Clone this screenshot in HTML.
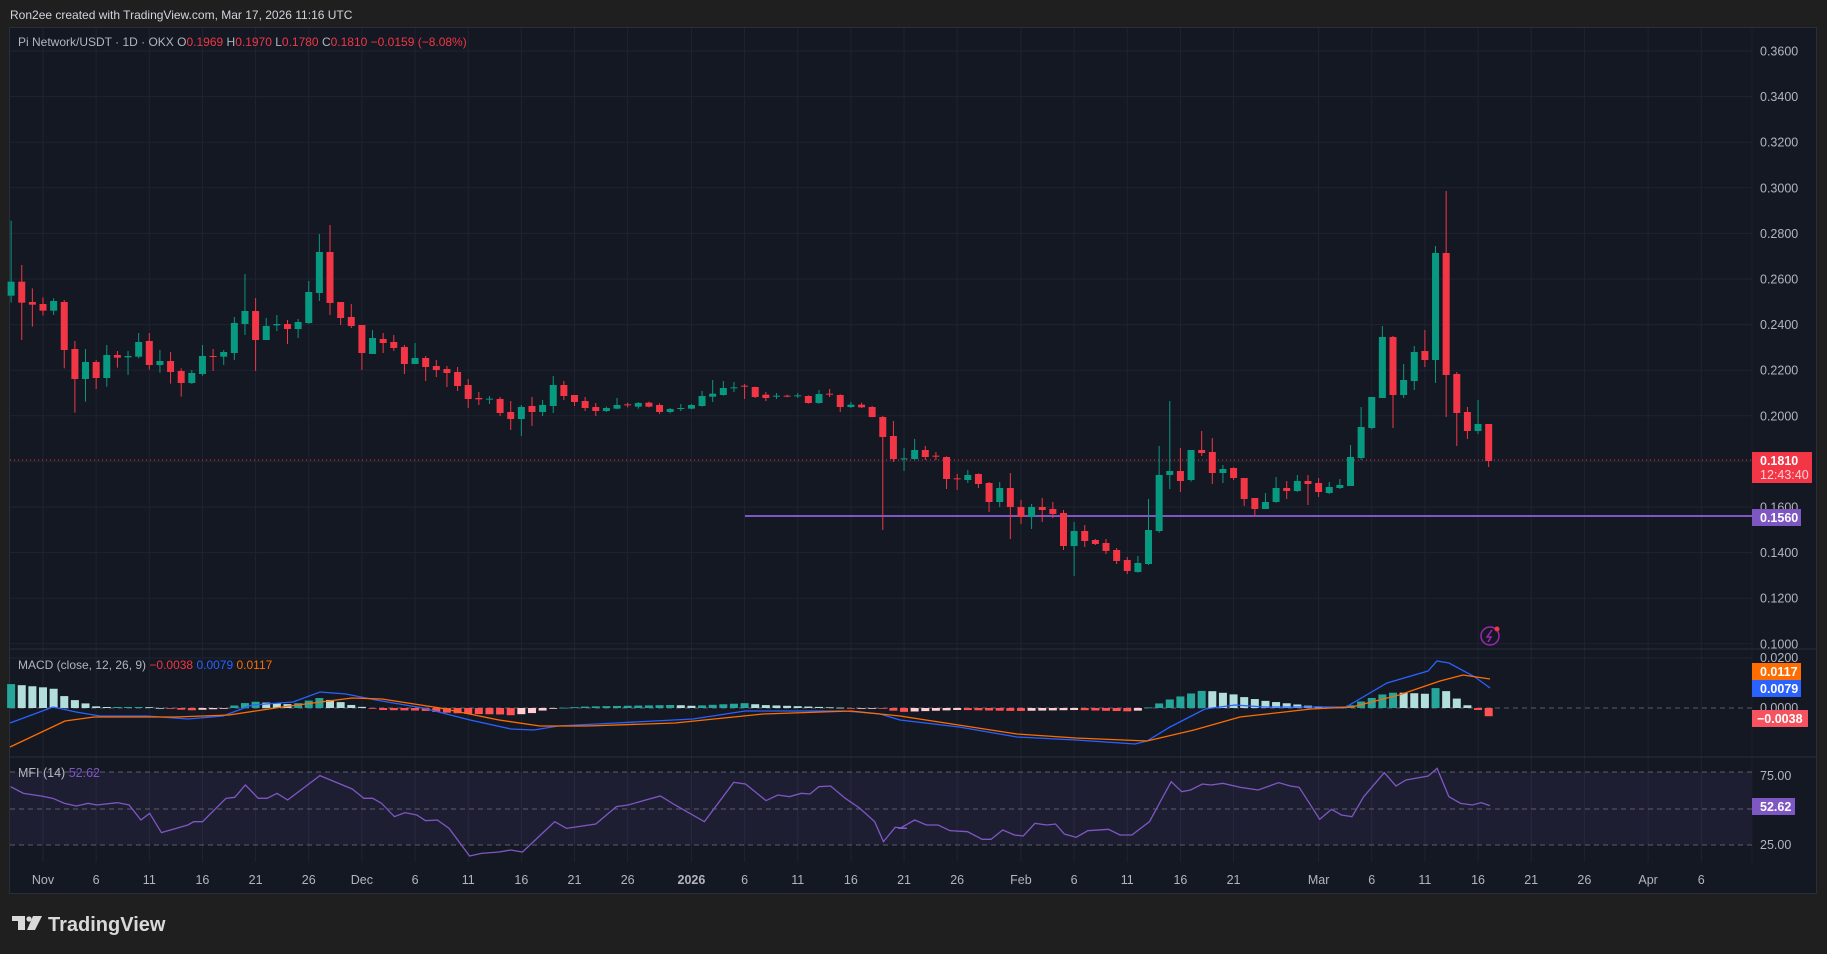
<!DOCTYPE html>
<html><head><meta charset="utf-8"><style>
html,body{margin:0;padding:0;background:#1f1f1f;width:1827px;height:954px;overflow:hidden}
svg{position:absolute;left:0;top:0;font-family:"Liberation Sans",sans-serif}
</style></head><body>
<svg id="s" width="1827" height="954" viewBox="0 0 1827 954" xmlns="http://www.w3.org/2000/svg">
<rect x="0" y="0" width="1827" height="954" fill="#1f1f1f"/>
<rect x="9.5" y="27.5" width="1807" height="866" fill="#141823" stroke="#2a2e39"/>
<g id="grid"></g>
<rect x="10" y="772" width="1742" height="73" fill="#7e57c2" fill-opacity="0.1"/>
<line x1="10" y1="649" x2="1816" y2="649" stroke="#2a2e39"/>
<line x1="10" y1="757" x2="1816" y2="757" stroke="#2a2e39"/>
<line x1="1752" y1="28" x2="1752" y2="862" stroke="#1c202b"/>
<g stroke="#787b86" stroke-opacity="0.7" stroke-dasharray="5,4">
<line x1="10" y1="708" x2="1752" y2="708"/>
<line x1="10" y1="772" x2="1752" y2="772"/>
<line x1="10" y1="809" x2="1752" y2="809"/>
<line x1="10" y1="845" x2="1752" y2="845"/>
</g>
<line x1="10" y1="460" x2="1752" y2="460" stroke="#f23645" stroke-dasharray="1,3"/>
<line x1="745" y1="516" x2="1752" y2="516" stroke="#7e57c2" stroke-width="2"/>
<g id="candles"></g>
<g id="hist"></g>
<g id="lines"></g>
<text x="10" y="19" font-size="12" fill="#d1d4dc">Ron2ee created with TradingView.com, Mar 17, 2026 11:16 UTC</text>
<text x="18" y="46" font-size="12" fill="#b2b5be">Pi Network/USDT · 1D · OKX  O<tspan fill="#f23645">0.1969</tspan>  H<tspan fill="#f23645">0.1970</tspan>  L<tspan fill="#f23645">0.1780</tspan>  C<tspan fill="#f23645">0.1810</tspan>  <tspan fill="#f23645">−0.0159 (−8.08%)</tspan></text>
<text x="18" y="669" font-size="12" fill="#b2b5be">MACD (close, 12, 26, 9)  <tspan fill="#f23645">−0.0038</tspan>  <tspan fill="#2962ff">0.0079</tspan>  <tspan fill="#ff6d00">0.0117</tspan></text>
<text x="18" y="777" font-size="12.5" fill="#b2b5be">MFI (14)  <tspan fill="#7e57c2">52.62</tspan></text>
<g id="axis" font-size="12.5" fill="#b2b5be"></g>
<g font-size="12.5" font-weight="bold" fill="#fff">
<rect x="1752" y="452" width="60" height="31" fill="#f23645"/>
<text x="1760" y="465">0.1810</text><text x="1760" y="479" font-weight="normal" fill="#ffd0d4">12:43:40</text>
<rect x="1752" y="509" width="49" height="17" fill="#7e57c2"/><text x="1760" y="522">0.1560</text>
<rect x="1752" y="663" width="49" height="17" fill="#ff6d00"/><text x="1760" y="676">0.0117</text>
<rect x="1752" y="680" width="49" height="17" fill="#2962ff"/><text x="1760" y="693">0.0079</text>
<rect x="1752" y="710" width="56" height="17" fill="#f7525f"/><text x="1757" y="723">−0.0038</text>
<rect x="1752" y="798" width="43" height="17" fill="#7e57c2"/><text x="1760" y="811">52.62</text>
</g>
<circle cx="1490" cy="636" r="9" fill="none" stroke="#9c27b0" stroke-width="1.5"/>
<path d="M1492 630 L1487 637 L1491 637 L1488 642" fill="none" stroke="#9c27b0" stroke-width="1.5"/>
<circle cx="1497" cy="629" r="2.5" fill="#f23645"/>
<g fill="#d9d9d9">
<path d="M12 916 H25 V930 H18 V921 H12 Z"/>
<circle cx="29" cy="919" r="2.6"/>
<path d="M33 916 H42 L35 930 H27 Z"/>
<text x="48" y="931" font-size="20" font-weight="bold">TradingView</text>
</g>
</svg>
<script>
var NS="http://www.w3.org/2000/svg";
function el(p,t,a){var e=document.createElementNS(NS,t);for(var k in a)e.setAttribute(k,a[k]);p.appendChild(e);return e;}
function X(d){return 43+d*10.63;}
var grid=document.getElementById('grid'),axis=document.getElementById('axis');
var labels=[[0,'Nov'],[5,'6'],[10,'11'],[15,'16'],[20,'21'],[25,'26'],[30,'Dec'],[35,'6'],[40,'11'],[45,'16'],[50,'21'],[55,'26'],[61,'2026'],[66,'6'],[71,'11'],[76,'16'],[81,'21'],[86,'26'],[92,'Feb'],[97,'6'],[102,'11'],[107,'16'],[112,'21'],[120,'Mar'],[125,'6'],[130,'11'],[135,'16'],[140,'21'],[145,'26'],[151,'Apr'],[156,'6']];
labels.forEach(function(l){var x=X(l[0]);el(grid,'line',{x1:x,y1:28,x2:x,y2:862,stroke:'#1f2330'});
 var t=el(axis,'text',{x:x,y:884,'text-anchor':'middle'});t.textContent=l[1];if(l[1]=='2026')t.setAttribute('font-weight','bold');});
for(var i=0;i<=13;i++){var y=51+i*45.6;el(grid,'line',{x1:10,y1:y,x2:1752,y2:y,stroke:'#1f2330'});
 var t=el(axis,'text',{x:1760,y:y+4.5});t.textContent=(0.36-i*0.02).toFixed(4);}
el(grid,'line',{x1:10,y1:658,x2:1752,y2:658,stroke:'#1f2330'});
[[658,'0.0200'],[708,'0.0000'],[776,'75.00'],[845,'25.00']].forEach(function(a){var t=el(axis,'text',{x:1760,y:a[0]+4});t.textContent=a[1];});
var A=[['g',245,287,62,308],['r',245,308,195,420],['r',306,314,265,380],['r',312,332,292,347],['g',303,332,295,345],['r',306,450,300,505],['r',447,537,423,638],['g',486,537,447,605],['r',486,534,480,567],['g',465,534,435,560],['r',465,473,453,503],['g',468,472,453,525],['g',426,470,399,475],['r',423,495,399,509],['g',483,495,450,518],['r',483,516,456,551],['r',513,549,505,590],['g',519,549,510,552],['g',468,522,435,527],['r',468,470,447,513],['g',456,470,450,495],['g',369,459,351,480],['g',333,372,222,405],['r',333,420,294,513],['g',378,420,354,420],['g',372,376,345,393],['r',372,387,360,432],['g',366,387,357,414],['g',276,369,243,372],['g',156,279,102,303],['r',156,309,75,345],['r',306,354,306,375],['r',351,378,312,384],['r',375,459,375,510],['g',414,462,390,462],['r',417,429,399,459],['r',426,444,405,453],['r',441,492,435,522],['g',474,492,429,492],['r',474,501,468,543],['r',498,510,480,531],['r',507,519,498,561],['r',516,558,501,573],['r',555,597,537,624],['r',594,598,576,615],['g',596,599,588,612],['r',597,639,591,648],['r',636,657,603,690],['g',621,657,615,708],['r',618,636,591,678],['g',615,636,600,648],['g',555,618,528,639],['r',555,588,543,600],['r',585,606,585,618],['r',603,624,591,633],['r',621,633,609,648]];
var B=[['g',144,153,140,156],['g',135,146,114,148],['r',133,136,128,142],['g',129,140,126,146],['r',128,140,125,142],['r',135,156,130,162],['g',147,156,144,160],['g',144,146,132,153],['g',135,146,132,148],['g',108,138,93,140],['g',101,110,60,126],['g',84,105,63,107],['g',82,85,66,96],['r',77,79,72,117],['r',81,111,80,114],['r',104,114,96,123],['g',107,109,99,117],['r',107,109,104,112],['g',106,108,99,114],['r',108,129,106,131],['g',102,129,90,131],['r',101,103,87,111],['r',105,141,103,156],['g',134,141,126,144],['r',134,142,128,144],['r',141,171,138,172],['r',171,231,168,510],['r',228,297,183,306],['g',295,297,264,333],['g',270,297,237,299],['r',270,291,258,300],['r',287,289,276,300],['r',291,357,289,387],['r',355,357,342,390],['g',345,360,330,369],['r',342,372,340,384],['r',369,426,366,456],['g',384,426,366,441],['r',384,441,339,537],['r',441,471,420,492],['g',441,471,432,507],['r',441,450,414,486],['r',447,462,426,474],['r',459,558,450,570],['g',513,558,486,648],['r',513,543,495,561],['r',540,552,537,555],['r',549,573,537,582],['r',570,603,564,612],['r',600,633,591,642],['g',609,636,588,638],['g',510,612,417,615]];
var C=[['g',885,1053,798,1058],['g',873,885,663,927],['r',873,903,804,936],['g',810,900,810,905],['r',810,819,753,828],['r',816,879,774,912],['g',867,879,855,909],['r',864,894,862,900],['r',894,957,894,978],['r',954,987,954,1011],['g',966,987,939,987],['g',924,966,891,968],['r',924,933,903,957],['g',903,933,885,936],['r',903,912,885,975],['r',909,936,894,951],['g',921,939,906,942],['g',915,924,897,927],['g',831,918,795,918],['g',741,834,681,840],['g',651,744,651,748],['g',471,654,438,654],['r',471,645,468,744],['g',600,645,552,654],['g',516,603,498,630],['r',513,540,450,561],['g',219,540,198,609],['r',219,585,33,711],['r',582,699,576,798],['r',696,753,681,777],['g',732,753,660,762],['r',732,843,732,861]];
var cg=document.getElementById('candles');
function draw(arr,d0,y0){arr.forEach(function(c,i){var x=X(d0+i),col=c[0]=='g'?'#089981':'#f23645';
 var t=y0+c[1]/3,b=y0+c[2]/3,wt=y0+Math.min(c[3],c[1])/3,wb=y0+Math.max(c[4],c[2])/3;
 if(x<11)return;
 el(cg,'line',{x1:x,y1:wt,x2:x,y2:wb,stroke:col,'stroke-width':1});
 el(cg,'rect',{x:x-3.5,y:t,width:7,height:Math.max(1,b-t),fill:col});});}
draw(A,-3,200);draw(B,53,360);draw(C,105,180);
var blue=[[10,723],[53,707],[76,712],[100,716],[147,716],[188,719],[223,716],[252,705],[293,702],[320,692],[346,694],[376,700],[423,708],[470,720],[511,729],[534,730],[558,726],[616,723],[693,719],[745,711],[845,711],[880,714],[900,720],[959,727],[1017,737],[1076,740],[1135,744],[1147,741],[1170,727],[1205,709],[1235,705],[1264,707],[1311,707],[1346,707],[1387,683],[1428,671],[1437,661],[1449,663],[1475,677],[1490,688]];
var orng=[[10,747],[65,721],[94,717],[176,717],[229,715],[282,707],[352,698],[382,699],[440,708],[499,720],[540,726],[587,726],[675,723],[763,714],[851,711],[900,716],[1017,734],[1076,738],[1147,741],[1194,730],[1240,717],[1311,709],[1352,707],[1399,695],[1440,681],[1463,675],[1490,679]];
function interp(p,x){if(x<=p[0][0])return p[0][1];for(var i=1;i<p.length;i++){if(x<=p[i][0]){var a=p[i-1],b=p[i];return a[1]+(b[1]-a[1])*(x-a[0])/(b[0]-a[0]);}}return p[p.length-1][1];}
var hg=document.getElementById('hist'),prev=null;
for(var d=-3;d<=136;d++){var x=X(d);if(x<11)continue;var h=interp(orng,x)-interp(blue,x);
 var col;if(h>=0)col=(prev!==null&&h<prev)?'#b2dfdb':'#26a69a';else col=(prev!==null&&h<prev)?'#ff5252':'#ffcdd2';
 prev=h;var y=h>=0?708-h:708;el(hg,'rect',{x:x-4,y:y,width:8,height:Math.max(0.8,Math.abs(h)),fill:col});}
var lg=document.getElementById('lines');
function pl(p,c){el(lg,'polyline',{points:p.map(function(q){return q.join(',')}).join(' '),fill:'none',stroke:c,'stroke-width':1.3});}
pl(blue,'#2962ff');pl(orng,'#ff6d00');
var m1=[[18,440],[40,460],[70,468],[90,475],[110,490],[130,498],[150,490],[165,495],[200,488],[220,495],[240,540],[255,520],[275,578],[300,565],[320,555],[330,545],[345,545],[385,475],[400,472],[418,435],[440,475],[455,475],[472,460],[490,480],[545,407],[600,447],[620,475],[635,475],[650,490],[672,530],[690,518],[710,525],[725,542],[745,540],[765,565],[800,648],[820,640],[850,636],[870,630],[890,636],[945,545],[965,565],[1015,552],[1050,500],[1070,495],[1100,480],[1125,468],[1150,495],[1200,545],[1250,427],[1270,432],[1305,482],[1325,465],[1345,470],[1365,460],[1380,462],[1395,440],[1415,438],[1440,475],[1465,505],[1490,545],[1505,605],[1525,562],[1545,565]];
var m2=[[0,565],[25,540],[45,555],[65,555],[85,572],[115,575],[140,598],[155,598],[175,570],[195,585],[210,588],[230,550],[250,555],[265,552],[280,582],[300,592],[320,572],[355,568],[375,585],[395,585],[425,545],[445,480],[462,425],[480,455],[495,450],[515,432],[530,435],[550,430],[580,442],[610,450],[645,428],[665,438],[680,442],[715,538],[735,508],[752,525],[770,530],[790,470],[825,398],[845,438],[862,420],[900,408],[915,385],[935,470],[955,490],[975,495],[990,488],[1005,497]];
var mfi=m1.map(function(q){return [q[0]*0.587,640+q[1]/3]}).concat(m2.map(function(q){return [900+q[0]*0.587,640+q[1]/3]}));
pl(mfi,'#7e57c2');
</script>
</body></html>
